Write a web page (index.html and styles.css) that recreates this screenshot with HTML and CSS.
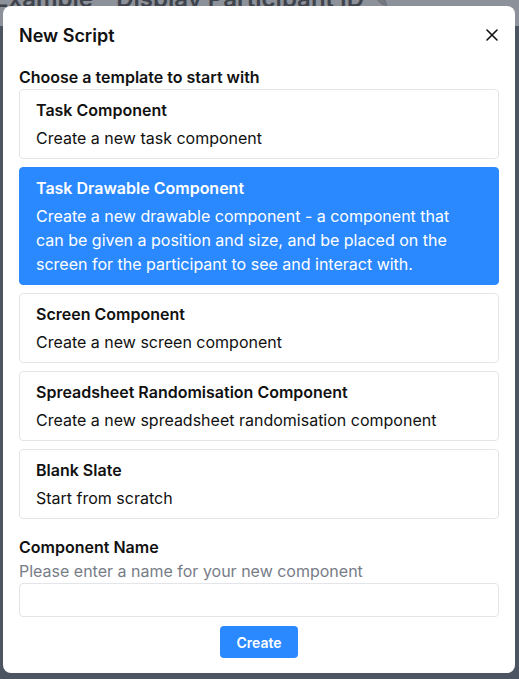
FILE: index.html
```html
<!DOCTYPE html>
<html lang="en">
<head>
    <meta charset="UTF-8">
    <meta name="viewport" content="width=device-width, initial-scale=1.0">
    <title>New Script</title>
    <link rel="stylesheet" href="styles.css">
</head>
<body>
    <div class="page">
        <div class="page-header">
            <h2 class="page-title">Example - Display Participant ID <span class="edit">&#9998;</span></h2>
        </div>
        <div class="page-body"></div>
    </div>

    <div class="modal">
        <div class="modal-header">
            <h1>New Script</h1>
            <button class="close" aria-label="Close">
                <svg width="12" height="12" viewBox="0 0 12 12">
                    <path d="M1 1 L11 11 M11 1 L1 11" stroke="#111" stroke-width="1.6" stroke-linecap="round"/>
                </svg>
            </button>
        </div>

        <div class="section-label">Choose a template to start with</div>
        <div class="templates">
            <div class="template">
                <div class="template-title">Task Component</div>
                <div class="template-desc">Create a new task component</div>
            </div>
            <div class="template selected">
                <div class="template-title">Task Drawable Component</div>
                <div class="template-desc">Create a new drawable component - a component that can be given a position and size, and be placed on the screen for the participant to see and interact with.</div>
            </div>
            <div class="template">
                <div class="template-title">Screen Component</div>
                <div class="template-desc">Create a new screen component</div>
            </div>
            <div class="template">
                <div class="template-title">Spreadsheet Randomisation Component</div>
                <div class="template-desc">Create a new spreadsheet randomisation component</div>
            </div>
            <div class="template">
                <div class="template-title">Blank Slate</div>
                <div class="template-desc">Start from scratch</div>
            </div>
        </div>

        <div class="field">
            <label class="section-label" for="name">Component Name</label>
            <div class="help">Please enter a name for your new component</div>
            <input type="text" id="name" class="input">
        </div>

        <div class="actions">
            <button class="btn">Create</button>
        </div>
    </div>
</body>
</html>
```

FILE: styles.css
```css
* {
    margin: 0;
    padding: 0;
    box-sizing: border-box;
}

body {
    font-family: Inter, 'Noto Sans', sans-serif;
    background: #4d5462;
    height: 679px;
    overflow: hidden;
    color: #111;
}

.page-header {
    background: #8d9199;
    height: 26px;
    overflow: hidden;
}

.page-title {
    font-size: 24px;
    font-weight: 600;
    color: #3f444c;
    line-height: 24px;
    margin-top: -13px;
    margin-left: -6px;
    white-space: nowrap;
}

.edit {
    font-size: 15px;
    color: #6f747c;
    margin-left: 6px;
}

.modal {
    position: absolute;
    top: 6px;
    left: 3px;
    width: 512px;
    height: 667px;
    background: #fff;
    border-radius: 8px;
    padding: 18px 16px 16px;
}

.modal-header {
    display: flex;
    align-items: center;
    justify-content: space-between;
    margin-bottom: 17px;
}

.modal-header h1 {
    font-size: 18px;
    font-weight: 600;
    line-height: 24px;
}

.close {
    background: none;
    border: none;
    width: 24px;
    height: 24px;
    display: flex;
    align-items: center;
    justify-content: center;
    margin-right: -5px;
    margin-top: -3px;
    cursor: pointer;
}

.section-label {
    display: block;
    font-size: 16px;
    font-weight: 600;
    line-height: 24px;
}

.templates {
    display: flex;
    flex-direction: column;
    gap: 8px;
}

.template {
    border: 1px solid #e3e5e8;
    border-radius: 4px;
    padding: 8px 24px 8px 16px;
    cursor: pointer;
}

.template-title {
    font-size: 16px;
    font-weight: 600;
    line-height: 24px;
    margin-bottom: 4px;
}

.template-desc {
    font-size: 16px;
    line-height: 24px;
}

.template.selected {
    background: #2b89ff;
    border-color: #2b89ff;
    color: #fff;
}

.field {
    margin-top: 16px;
}

.help {
    font-size: 16px;
    line-height: 24px;
    color: #777d87;
}

.input {
    display: block;
    width: 100%;
    height: 34px;
    border: 1px solid #e3e5e8;
    border-radius: 4px;
    font-family: inherit;
    font-size: 16px;
    padding: 0 10px;
}

.actions {
    display: flex;
    justify-content: center;
    margin-top: 9px;
}

.btn {
    background: #2b89ff;
    color: #fff;
    border: none;
    border-radius: 4px;
    height: 32px;
    padding: 0 16px;
    font-family: inherit;
    font-size: 14px;
    font-weight: 600;
    cursor: pointer;
}
```
